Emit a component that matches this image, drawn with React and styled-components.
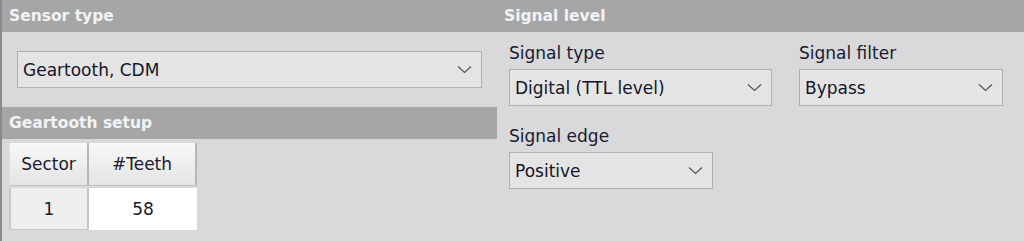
import React from "react";
import styled, { createGlobalStyle } from "styled-components";

const Global = createGlobalStyle`
  html, body { margin: 0; padding: 0; background: #d9d8db; }
  body { font-family: "DejaVu Sans", Tahoma, sans-serif; }
  #root { min-height: 241px; }
`;

const Page = styled.div`
  display: grid;
  grid-template-columns: 497px 1fr;
  height: 241px;
  background: #d9d8db;
  color: #1a1a2e;
  font-size: 17px;
`;

const Column = styled.section`
  display: flex;
  flex-direction: column;
  border-left: ${(p) => (p.$edge ? "2px solid #8a8a8a" : "none")};
  min-width: 0;
`;

const SectionHeader = styled.div`
  height: 32px;
  box-sizing: border-box;
  background: #a6a6a6;
  color: #f2f3f7;
  font-weight: bold;
  font-size: 15.5px;
  line-height: 32px;
  padding-left: 7px;
  white-space: nowrap;
`;

const SensorBody = styled.div`
  padding: 19px 15px 19px 15px;
`;

const Select = styled.div`
  box-sizing: border-box;
  height: 37px;
  width: ${(p) => p.$w || "100%"};
  border: 1px solid #b0b0b0;
  background: #e4e4e4;
  display: flex;
  align-items: center;
  justify-content: space-between;
  padding: 0 9px 0 5px;
  line-height: 20px;
  font-size: 17px;
  color: #15152a;
`;

const Chevron = () => (
  <svg width="15" height="9" viewBox="0 0 15 9" aria-hidden="true">
    <path d="M1 1.5 L7.5 7.5 L14 1.5" fill="none" stroke="#555" strokeWidth="1.2" />
  </svg>
);

const Table = styled.div`
  display: grid;
  grid-template-columns: 80px 108px;
  grid-template-rows: 43px 42px;
  row-gap: 2px;
  margin: 4px 0 0 7px;
  width: max-content;
`;

const HeadCell = styled.div`
  box-sizing: border-box;
  display: flex;
  align-items: center;
  justify-content: center;
  background: linear-gradient(#f8f8f8, #e4e4e4);
  border-right: 2px solid #bdb6aa;
  border-bottom: 1px solid #c9c2b6;
  border-left: ${(p) => (p.$first ? "1px solid #e0e0e0" : "none")};
  font-size: 17px;
`;

const DataCell = styled.div`
  box-sizing: border-box;
  display: flex;
  align-items: center;
  justify-content: center;
  background: ${(p) => (p.$white ? "#ffffff" : "#efefef")};
  border-left: ${(p) => (p.$white ? "none" : "2px solid #c8c8c8")};
  border-right: ${(p) => (p.$white ? "none" : "2px solid #c8c8c8")};
  border-bottom: ${(p) => (p.$white ? "none" : "1px solid #c8c8c8")};
  font-size: 17px;
`;

const SignalBody = styled.div`
  display: flex;
  flex-direction: column;
  gap: 20px;
  padding: 11px 0 0 12px;
`;

const FieldRow = styled.div`
  display: flex;
  gap: 27px;
`;

const Field = styled.div`
  display: flex;
  flex-direction: column;
  gap: 6px;
`;

const Label = styled.div`
  font-size: 17px;
  line-height: 20px;
  color: #1a1a30;
`;

export default function App() {
  return (
    <>
      <Global />
      <Page>
        <Column $edge>
          <SectionHeader>Sensor type</SectionHeader>
          <SensorBody>
            <Select>
              <span>Geartooth, CDM</span>
              <Chevron />
            </Select>
          </SensorBody>
          <SectionHeader>Geartooth setup</SectionHeader>
          <Table>
            <HeadCell $first>Sector</HeadCell>
            <HeadCell>#Teeth</HeadCell>
            <DataCell>1</DataCell>
            <DataCell $white>58</DataCell>
          </Table>
        </Column>
        <Column>
          <SectionHeader>Signal level</SectionHeader>
          <SignalBody>
            <FieldRow>
              <Field>
                <Label>Signal type</Label>
                <Select $w="263px">
                  <span>Digital (TTL level)</span>
                  <Chevron />
                </Select>
              </Field>
              <Field>
                <Label>Signal filter</Label>
                <Select $w="204px">
                  <span>Bypass</span>
                  <Chevron />
                </Select>
              </Field>
            </FieldRow>
            <FieldRow>
              <Field>
                <Label>Signal edge</Label>
                <Select $w="204px">
                  <span>Positive</span>
                  <Chevron />
                </Select>
              </Field>
            </FieldRow>
          </SignalBody>
        </Column>
      </Page>
    </>
  );
}
